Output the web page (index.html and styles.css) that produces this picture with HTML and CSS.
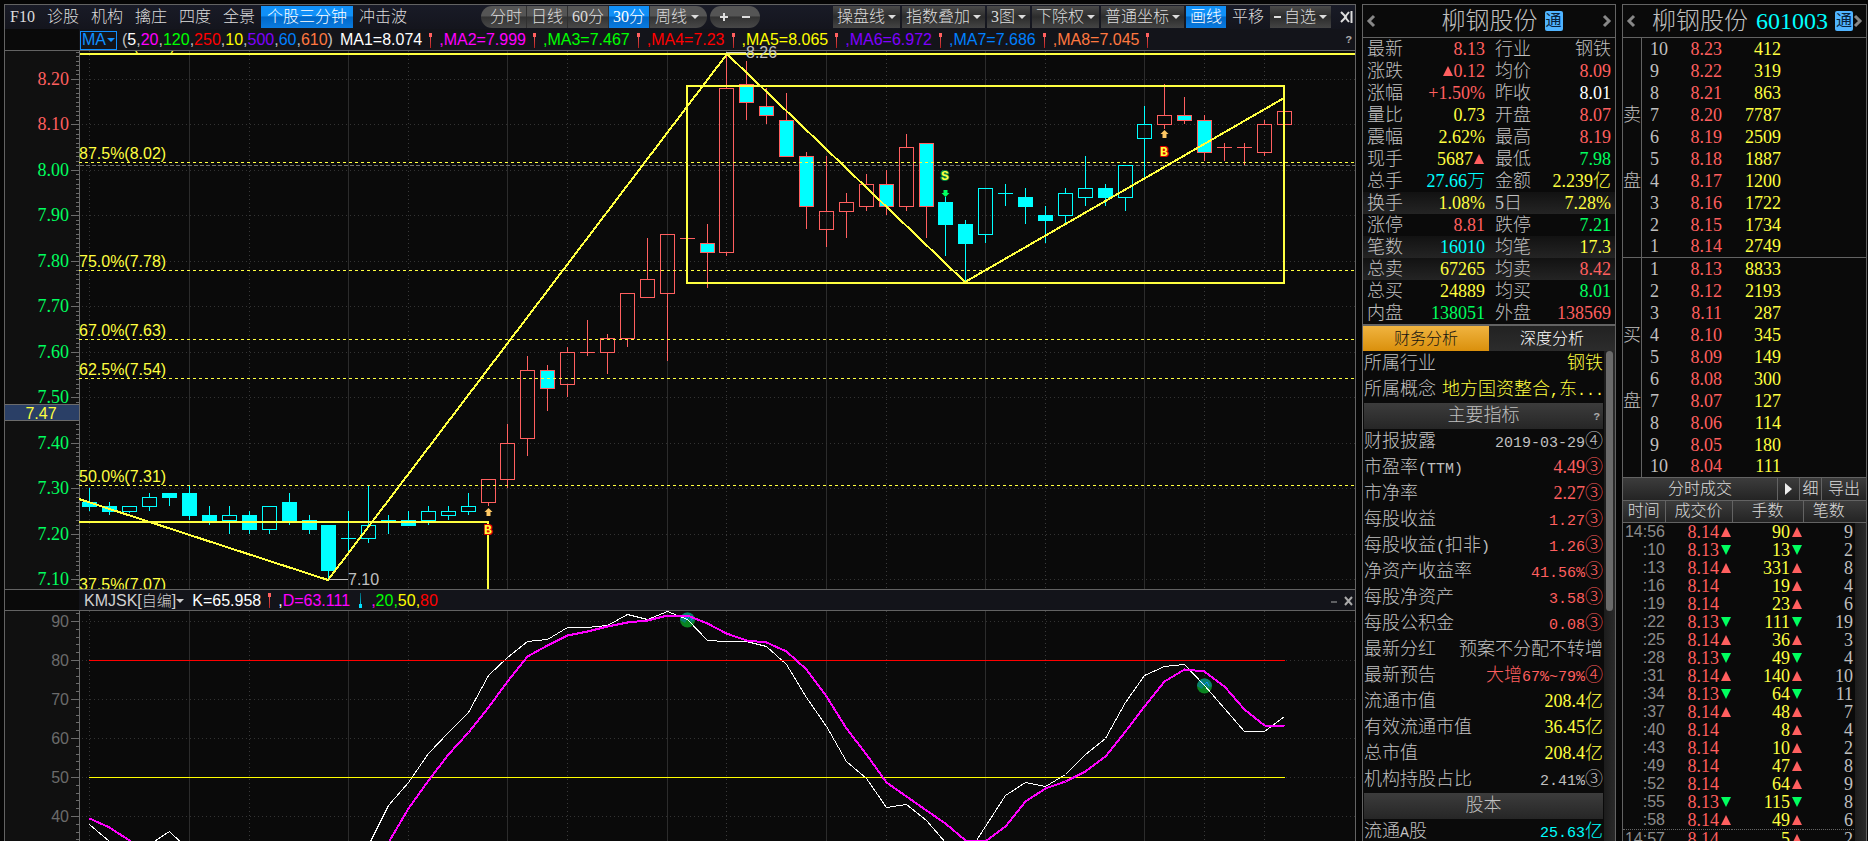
FILE: index.html
```html
<!DOCTYPE html>
<html lang="zh-CN">
<head>
<meta charset="utf-8">
<title>柳钢股份 601003</title>
<link rel="stylesheet" href="styles.css">
</head>
<body>
<div class="app">

<main class="panel charts">
  <nav class="toolbar">
    <div class="tabs">
      <button>F10</button><button>诊股</button><button>机构</button><button>擒庄</button><button>四度</button><button>全景</button><button class="active">个股三分钟</button><button>冲击波</button>
    </div>
    <div class="pill periods">
      <button>分时</button><button>日线</button><button>60分</button><button class="active">30分</button><button>周线<i class="caret"></i></button>
    </div>
    <div class="pill zoomer"><button aria-label="放大"><svg width="10" height="10"><path d="M5 1v8M1 5h8" stroke="#ddd" stroke-width="2"/></svg></button><button aria-label="缩小"><svg width="10" height="10"><path d="M1 5h8" stroke="#ddd" stroke-width="2"/></svg></button></div>
    <div class="tools">
      <button>操盘线<i class="caret"></i></button><button>指数叠加<i class="caret"></i></button><button>3图<i class="caret"></i></button><button>下除权<i class="caret"></i></button><button>普通坐标<i class="caret"></i></button><button class="active">画线</button><button class="plain">平移</button><button><svg width="7" height="8"><path d="M0 4h7" stroke="#ddd" stroke-width="2"/></svg>自选<i class="caret"></i></button><button class="plain end" aria-label="收起"><svg width="13" height="14"><path d="M1 2l5 5-5 5M9 2L5 7l4 5" fill="none" stroke="#ddd" stroke-width="2"/><path d="M11.500 1v12" stroke="#ddd" stroke-width="2"/></svg></button>
    </div>
  </nav>

  <div class="legend">
    <button class="ma">MA<i class="caret"></i></button>
    <p class="params">(<b class="w">5</b>,<b class="m">20</b>,<b class="g">120</b>,<b class="r">250</b>,<b class="y">10</b>,<b class="v">500</b>,<b class="b">60</b>,<b class="o">610</b>)</p>
    <p class="values"><b class="w">MA1=8.074</b><i class="up"></i><b class="m">,MA2=7.999</b><i class="up"></i><b class="g">,MA3=7.467</b><i class="up"></i><b class="r">,MA4=7.23</b><i class="up"></i><b class="y">,MA5=8.065</b><i class="up"></i><b class="v">,MA6=6.972</b><i class="up"></i><b class="b">,MA7=7.686</b><i class="up"></i><b class="o">,MA8=7.045</b><i class="up"></i></p>
    <button class="help" aria-label="帮助">?</button>
  </div>

  <svg class="plot price" id="price" role="img" aria-label="K线图"></svg>

  <div class="legend sub">
    <button class="name">KMJSK[<span>自编</span>]<i class="caret"></i></button>
    <p class="values"><b class="w">K=65.958</b><i class="up"></i><b class="w">,</b><b class="m">D=63.111</b><i class="down"></i><b class="m">,</b><b class="g">20,</b><b class="y">50,</b><b class="r">80</b></p>
    <div class="win"><button aria-label="最小化"><svg width="6" height="10"><path d="M0 6h6" stroke="#aaa" stroke-width="1"/></svg></button><button aria-label="关闭"><svg width="9" height="10"><path d="M1 1l7 8M8 1l-7 8" stroke="#aaa" stroke-width="2"/></svg></button></div>
  </div>

  <svg class="plot osc" id="osc" role="img" aria-label="KMJSK 指标"></svg>
</main>

<section class="panel quote">
  <header class="head">
    <button aria-label="上一个"><svg width="10" height="14"><path d="M8 2L3 7l5 5" fill="none" stroke="#888" stroke-width="3"/></svg></button>
    <h2>柳钢股份<span class="tag">通</span></h2>
    <button aria-label="下一个"><svg width="10" height="14"><path d="M2 2l5 5-5 5" fill="none" stroke="#888" stroke-width="3"/></svg></button>
  </header>
  <table class="facts">
    <tr><th>最新</th><td class="red">8.13</td><th>行业</th><td class="grey">钢铁</td></tr>
    <tr><th>涨跌</th><td class="red"><i class="tri"></i>0.12</td><th>均价</th><td class="red">8.09</td></tr>
    <tr><th>涨幅</th><td class="red">+1.50%</td><th>昨收</th><td class="white">8.01</td></tr>
    <tr><th>量比</th><td class="yel">0.73</td><th>开盘</th><td class="red">8.07</td></tr>
    <tr><th>震幅</th><td class="yel">2.62%</td><th>最高</th><td class="red">8.19</td></tr>
    <tr><th>现手</th><td class="yel">5687<i class="tri"></i></td><th>最低</th><td class="grn">7.98</td></tr>
    <tr><th>总手</th><td class="cyan">27.66万</td><th>金额</th><td class="yel">2.239亿</td></tr>
    <tr class="band"><th>换手</th><td class="yel">1.08%</td><th>5日</th><td class="yel">7.28%</td></tr>
    <tr><th>涨停</th><td class="red">8.81</td><th>跌停</th><td class="grn">7.21</td></tr>
    <tr class="band"><th>笔数</th><td class="cyan">16010</td><th>均笔</th><td class="yel">17.3</td></tr>
    <tr class="band"><th>总卖</th><td class="yel">67265</td><th>均卖</th><td class="red">8.42</td></tr>
    <tr><th>总买</th><td class="yel">24889</td><th>均买</th><td class="grn">8.01</td></tr>
    <tr><th>内盘</th><td class="grn">138051</td><th>外盘</th><td class="red">138569</td></tr>
  </table>
  <div class="switch"><button class="on">财务分析</button><button>深度分析</button></div>
  <div class="fin">
    <dl>
      <div><dt>所属行业</dt><dd class="yel">钢铁</dd></div>
      <div class="concept"><dt>所属概念</dt><dd class="yel">地方国资整合<span class="mono">,</span>东<span class="mono">...</span></dd></div>
      <h3>主要指标<button class="help" aria-label="帮助">?</button></h3>
      <div><dt>财报披露</dt><dd><span class="mono">2019-03-29</span>④</dd></div>
      <div><dt>市盈率<span class="mono">(TTM)</span></dt><dd class="red">4.49③</dd></div>
      <div><dt>市净率</dt><dd class="red">2.27③</dd></div>
      <div><dt>每股收益</dt><dd class="red"><span class="mono">1.27</span>③</dd></div>
      <div><dt>每股收益<span class="mono">(</span>扣非<span class="mono">)</span></dt><dd class="red"><span class="mono">1.26</span>③</dd></div>
      <div><dt>净资产收益率</dt><dd class="red"><span class="mono">41.56%</span>③</dd></div>
      <div><dt>每股净资产</dt><dd class="red"><span class="mono">3.58</span>③</dd></div>
      <div><dt>每股公积金</dt><dd class="red"><span class="mono">0.08</span>③</dd></div>
      <div><dt>最新分红</dt><dd>预案不分配不转增</dd></div>
      <div><dt>最新预告</dt><dd class="red">大增<span class="mono">67%~79%</span>④</dd></div>
      <div><dt>流通市值</dt><dd class="yel">208.4亿</dd></div>
      <div><dt>有效流通市值</dt><dd class="yel">36.45亿</dd></div>
      <div><dt>总市值</dt><dd class="yel">208.4亿</dd></div>
      <div><dt>机构持股占比</dt><dd><span class="mono">2.41%</span>③</dd></div>
      <h3>股本</h3>
      <div><dt>流通<span class="mono">A</span>股</dt><dd class="cyan"><span class="mono">25.63</span>亿</dd></div>
    </dl>
    <div class="track"><div class="thumb"></div></div>
  </div>
</section>

<section class="panel book">
  <header class="head">
    <button aria-label="上一个"><svg width="10" height="14"><path d="M8 2L3 7l5 5" fill="none" stroke="#888" stroke-width="3"/></svg></button>
    <h2>柳钢股份<span class="code">601003</span><span class="tag">通</span></h2>
    <button aria-label="下一个"><svg width="10" height="14"><path d="M2 2l5 5-5 5" fill="none" stroke="#888" stroke-width="3"/></svg></button>
  </header>
  <div class="side">
    <div class="label"><span>卖</span><span>盘</span></div>
    <table>
      <tr><th>10</th><td>8.23</td><td>412</td></tr>
      <tr><th>9</th><td>8.22</td><td>319</td></tr>
      <tr><th>8</th><td>8.21</td><td>863</td></tr>
      <tr><th>7</th><td>8.20</td><td>7787</td></tr>
      <tr><th>6</th><td>8.19</td><td>2509</td></tr>
      <tr><th>5</th><td>8.18</td><td>1887</td></tr>
      <tr><th>4</th><td>8.17</td><td>1200</td></tr>
      <tr><th>3</th><td>8.16</td><td>1722</td></tr>
      <tr><th>2</th><td>8.15</td><td>1734</td></tr>
      <tr><th>1</th><td>8.14</td><td>2749</td></tr>
    </table>
  </div>
  <div class="side">
    <div class="label"><span>买</span><span>盘</span></div>
    <table>
      <tr><th>1</th><td>8.13</td><td>8833</td></tr>
      <tr><th>2</th><td>8.12</td><td>2193</td></tr>
      <tr><th>3</th><td>8.11</td><td>287</td></tr>
      <tr><th>4</th><td>8.10</td><td>345</td></tr>
      <tr><th>5</th><td>8.09</td><td>149</td></tr>
      <tr><th>6</th><td>8.08</td><td>300</td></tr>
      <tr><th>7</th><td>8.07</td><td>127</td></tr>
      <tr><th>8</th><td>8.06</td><td>114</td></tr>
      <tr><th>9</th><td>8.05</td><td>180</td></tr>
      <tr><th>10</th><td>8.04</td><td>111</td></tr>
    </table>
  </div>
  <div class="bar"><button class="grow">分时成交</button><button class="play" aria-label="展开"><svg width="7" height="12"><path d="M0 0l7 6-7 6z" fill="#eee"/></svg></button><button class="fine">细</button><button class="export">导出</button></div>
  <div class="trades">
    <table>
      <thead><tr><th>时间</th><th>成交价</th><th>手数</th><th>笔数</th></tr></thead>
      <tbody>
      <tr><td>14:56</td><td>8.14<i class="tri"></i></td><td>90<i class="tri"></i></td><td>9</td></tr>
      <tr><td>:10</td><td>8.13<i class="tri dn"></i></td><td>13<i class="tri dn"></i></td><td>2</td></tr>
      <tr><td>:13</td><td>8.14<i class="tri"></i></td><td>331<i class="tri"></i></td><td>8</td></tr>
      <tr><td>:16</td><td>8.14<i class="tri no"></i></td><td>19<i class="tri"></i></td><td>4</td></tr>
      <tr><td>:19</td><td>8.14<i class="tri no"></i></td><td>23<i class="tri"></i></td><td>6</td></tr>
      <tr><td>:22</td><td>8.13<i class="tri dn"></i></td><td>111<i class="tri dn"></i></td><td>19</td></tr>
      <tr><td>:25</td><td>8.14<i class="tri"></i></td><td>36<i class="tri"></i></td><td>3</td></tr>
      <tr><td>:28</td><td>8.13<i class="tri dn"></i></td><td>49<i class="tri dn"></i></td><td>4</td></tr>
      <tr><td>:31</td><td>8.14<i class="tri"></i></td><td>140<i class="tri"></i></td><td>10</td></tr>
      <tr><td>:34</td><td>8.13<i class="tri dn"></i></td><td>64<i class="tri dn"></i></td><td>11</td></tr>
      <tr><td>:37</td><td>8.14<i class="tri"></i></td><td>48<i class="tri"></i></td><td>7</td></tr>
      <tr><td>:40</td><td>8.14<i class="tri no"></i></td><td>8<i class="tri"></i></td><td>4</td></tr>
      <tr><td>:43</td><td>8.14<i class="tri no"></i></td><td>10<i class="tri"></i></td><td>2</td></tr>
      <tr><td>:49</td><td>8.14<i class="tri no"></i></td><td>47<i class="tri"></i></td><td>8</td></tr>
      <tr><td>:52</td><td>8.14<i class="tri no"></i></td><td>64<i class="tri"></i></td><td>9</td></tr>
      <tr><td>:55</td><td>8.13<i class="tri dn"></i></td><td>115<i class="tri dn"></i></td><td>8</td></tr>
      <tr><td>:58</td><td>8.14<i class="tri"></i></td><td>49<i class="tri"></i></td><td>6</td></tr>
      <tr class="minute"><td>14:57</td><td>8.14<i class="tri no"></i></td><td>5<i class="tri"></i></td><td>2</td></tr>
      </tbody>
    </table>
    <div class="track"></div>
  </div>
</section>

</div>
<script src="chart.js"></script>
</body>
</html>
```

FILE: styles.css
```css
* { box-sizing: border-box; }
html, body { margin: 0; height: 100%; }
body {
  background: #050505;
  color: #c0c0c0;
  font: 18px/22px "Liberation Serif", "Noto Sans CJK SC", serif;
  overflow: hidden;
}
button {
  margin: 0; padding: 0; border: 0; background: none;
  color: inherit; font: inherit; line-height: inherit; cursor: pointer; white-space: nowrap;
}
h2, h3, p, dl, dd { margin: 0; font-weight: 400; }
h2, h3, th, dt, button, td, dd { font-weight: 300; }
th { text-align: left; }
table { border-collapse: collapse; border-spacing: 0; }
i { font-style: normal; }
svg { display: block; }

.app {
  display: grid;
  grid-template-columns: minmax(0, 1fr) 254px 245px;
  gap: 6px;
  height: 100vh;
  padding: 4px 1px 0 4px;
}
.panel {
  display: flex; flex-direction: column;
  min-height: 0; overflow: hidden;
  border: 1px solid #636363; border-bottom: 0;
  background: #0a0a0a;
}

.red { color: #ff5f5f; }
.grn { color: #00ff5f; }
.yel { color: #ffff40; }
.cyan { color: #00ffff; }
.white { color: #fff; }
.mono { font-family: "Liberation Mono", monospace; font-size: 15px; }

.caret {
  display: inline-block;
  border: 4px solid transparent; border-top-color: currentColor; border-bottom: 0;
}

/* toolbar */
.toolbar {
  display: flex; align-items: center; flex: none;
  height: 24px;
  background: linear-gradient(#191b27, #14151d);
  color: #dcdcdc; font-size: 16px; line-height: 22px;
}
.tabs, .tools, .pill { display: flex; }
.tabs { margin-right: 68px; }
.tabs button { padding: 0 6px; }
.tabs button:first-child { padding-left: 5px; }
.tabs button, .pill button, .tools button { height: 22px; }
.toolbar .active { background: linear-gradient(#1090f8 45%, #0068c8 50%, #0a7be0); color: #fff; }
.pill {
  border-radius: 11px; overflow: hidden;
  background: linear-gradient(#555 45%, #333 50%, #484848);
}
.periods button { padding: 0 4px; border-right: 1px solid #303030; }
.periods button:first-child { padding: 0 4px 0 9px; }
.periods button:last-child { display: flex; align-items: center; gap: 4px; padding: 0 8px 0 5px; border: 0; }
.zoomer { margin-left: 3px; padding: 0 9px; gap: 12px; }
.zoomer button { display: flex; align-items: center; }
.tools { gap: 2px; margin-left: auto; margin-right: 2px; }
.tools button {
  display: flex; align-items: center; gap: 3px; padding: 0 4px;
  background: linear-gradient(#4a4a4a, #2c2c2c 50%, #444);
}
.tools .active { background: linear-gradient(#1090f8 45%, #0068c8 50%, #0a7be0); }
.tools .plain { background: none; }
.tools .end { padding: 0; margin-left: 7px; }

/* legends */
.legend {
  display: flex; align-items: center; flex: none;
  height: 22px; padding-left: 75px; padding-top: 1px;
  background: linear-gradient(90deg, #0a0a0a 74px, #13141a 74px);
  border-bottom: 1px solid #636363;
  font: 16px/20px "Liberation Sans", "Noto Sans CJK SC", sans-serif;
}
.legend b { font-weight: 400; }
.ma {
  display: flex; align-items: center; gap: 1px; height: 19px; padding: 0 1px;
  border: 1px solid #1090ff; color: #1090ff; margin-right: 5px;
}
.params { margin-right: 7px; }
.values { display: flex; align-items: center; }
.w { color: #fff; } .m { color: #f0f; } .g { color: #0f0; } .r { color: #f00; }
.y { color: #ff0; } .v { color: #8000ff; } .b { color: #0080ff; } .o { color: #ff7840; }
.up, .down { width: 17px; height: 15px; background: linear-gradient(#ff6060, #b02020) center / 1px 100% no-repeat; }
.down { width: 21px; background-image: linear-gradient(#006070, #00e0ff); }
.up::before, .down::after {
  content: ""; display: block; width: 3px; height: 4px; margin: 0 auto; background: #ff6060;
}
.down::after { margin-top: 11px; background: #00e0ff; }
.help { margin-left: auto; margin-right: 3px; color: #aaa; font: 700 11px/20px "Liberation Mono", monospace; }
.sub { border-top: 1px solid #636363; padding-left: 79px; }
.name { display: flex; align-items: center; color: #d0d0d0; margin-right: 8px; }
.name span { font-size: 15px; }
.win { display: flex; align-items: center; gap: 7px; margin-left: auto; margin-right: 2px; }

/* plots */
.plot { width: 100%; flex: 0 0 538px; overflow: hidden; }
.price { position: relative; overflow: visible; }
.osc { flex: 1 1 0; min-height: 0; }
.plot text { font: 16px "Liberation Sans", sans-serif; }
.plot .tick { font: 18px "Liberation Serif", serif; text-anchor: end; }
.plot .end { text-anchor: end; }
.plot .mid { text-anchor: middle; }
.plot .mark { font: 700 13px "Liberation Mono", monospace; text-anchor: middle; paint-order: stroke; stroke-width: 2px; }
.crisp { shape-rendering: crispEdges; }

/* panel heads */
.head {
  display: flex; align-items: center; flex: none;
  height: 33px; padding: 0 3px; border-bottom: 1px solid #636363;
}
.head h2 {
  display: flex; align-items: center; justify-content: center; flex: 1;
  font-size: 24px; line-height: 32px; padding-left: 26px; white-space: nowrap;
}
.tag {
  flex: none; margin-left: 7px; width: 18px; height: 20px; border-radius: 2px;
  background: #50b4ff; color: #08223c; font-size: 16px; line-height: 19px; text-align: center; font-weight: 400;
}
.book .head h2 { padding-left: 16px; justify-content: flex-start; }
.code { color: #0ff; margin-left: 8px; font-weight: 400; }

/* quote */
.facts { width: 100%; table-layout: fixed; border-bottom: 2px solid #636363; }
.facts tr { height: 22px; }
.facts th, .facts td { padding: 0; line-height: 22px; white-space: nowrap; }
.facts th:first-child { width: 44px; padding-left: 4px; }
.facts th:nth-child(3) { width: 52px; padding-left: 10px; }
.facts td { text-align: right; }
.facts td:nth-child(2) { width: 78px; }
.facts td:last-child { padding-right: 4px; }
.band { background: linear-gradient(#121212, #242424); }
.tri {
  display: inline-block; vertical-align: 1px; margin: 0 1px 0 2px;
  border: 5px solid transparent; border-bottom: 10px solid #ff5f5f; border-top: 0;
}
.tri.dn { border-bottom: 0; border-top: 10px solid #00ff5f; }
.tri.no { border-color: transparent; }
.facts .tri { margin: 0 1px; }
.switch { display: flex; flex: none; height: 25px; font-size: 16px; line-height: 22px; }
.switch button { flex: 1; color: #fff; background: linear-gradient(#222, #2c2c2c); }
.switch .on { color: #111; background: linear-gradient(#f0b440, #da900c); }
.fin { display: flex; flex: 1; min-height: 0; }
.fin dl { flex: 1; padding: 0 1px; overflow: hidden; }
.fin dl > div { display: flex; justify-content: space-between; height: 26px; line-height: 25px; white-space: nowrap; }
.fin .concept { justify-content: flex-start; gap: 6px; }
.fin h3 {
  position: relative; height: 26px; text-align: center; font-size: 18px; line-height: 25px;
  background: linear-gradient(#3c3c3c, #262626);
}
.fin h3 .help { position: absolute; right: 0; top: 4px; }
.track { flex: 0 0 11px; background: linear-gradient(90deg, #1c1c1c, #2a2a2a); padding: 0 2px; }
.thumb { height: 260px; border-radius: 4px; background: #6a6a6a; }

/* order book */
.side { display: flex; flex: none; border-bottom: 1px solid #636363; }
.label {
  display: flex; flex-direction: column; justify-content: center; gap: 44px;
  width: 19px; border-right: 1px solid #636363; font-weight: 300;
}
.side tr { height: 22px; }
.side tr:last-child { height: 21px; }
.side th, .side td { padding: 0; line-height: 21px; }
.side th { width: 40px; padding-left: 8px; }
.side td { text-align: right; color: #ff5f5f; width: 40px; }
.side td:last-child { color: #ffff40; width: 59px; }
.bar {
  display: flex; flex: none; height: 23px; border-bottom: 1px solid #636363;
  background: linear-gradient(#3c3c3c, #242424); color: #dcdcdc; font-size: 16px; line-height: 22px;
}
.bar .grow { flex: 1; }
.bar button + button { border-left: 1px solid #636363; }
.bar .play { width: 22px; display: flex; align-items: center; justify-content: center; }
.bar .fine { width: 22px; }
.bar .export { width: 45px; }
.trades { position: relative; flex: 1; min-height: 0; overflow: hidden; }
.trades table { width: 100%; table-layout: fixed; }
.trades thead { background: linear-gradient(#3c3c3c, #242424); color: #dcdcdc; }
.trades thead th {
  height: 21px; padding: 0; line-height: 20px; font-size: 16px; text-align: center;
  border-bottom: 1px solid #636363; border-left: 1px solid #636363;
}
.trades thead th:first-child { width: 42px; border-left: 0; }
.trades thead th:nth-child(2) { width: 67px; }
.trades thead th:nth-child(3) { width: 71px; }
.trades thead th:last-child { padding-right: 12px; }
.trades tbody tr { height: 18px; }
.trades tbody td { padding: 0; line-height: 18px; text-align: right; }
.trades td:first-child { font: 16px/18px "Liberation Sans", sans-serif; color: #8c8c8c; }
.trades td:nth-child(2) { color: #ff5f5f; }
.trades td:nth-child(3) { color: #ffff40; }
.trades td:last-child { padding-right: 13px; }
.trades .minute td { border-top: 1px dotted #666; }
.trades .track { position: absolute; right: 0; top: 22px; bottom: 0; width: 11px; }
```

FILE: chart.js
```js
const NS = 'http://www.w3.org/2000/svg';
const RED = '#ff5f5f', CYAN = '#00ffff', YEL = '#ffff40', GREEN = '#00ff5f', AXIS = '#6b6b6b';
const AXIS_X = 74;

function add(parent, tag, attrs, text) {
  const el = document.createElementNS(NS, tag);
  for (const k in attrs) el.setAttribute(k, attrs[k]);
  if (text !== undefined) el.textContent = text;
  parent.appendChild(el);
  return el;
}
function hline(svg, x1, x2, y, color, extra) {
  add(svg, 'line', { x1, x2, y1: y + 0.5, y2: y + 0.5, stroke: color, class: 'crisp', ...extra });
}
function vline(svg, x, y1, y2, color, extra) {
  add(svg, 'line', { x1: x + 0.5, x2: x + 0.5, y1, y2, stroke: color, class: 'crisp', ...extra });
}
const shifts = [12, 21, 32, 43, 53];
const barX = i => 84 + 20 * i - shifts.filter(s => s <= i).length;
const priceY = p => Math.round(28 + (8.2 - p) * 454.6);

function verticalGrid(svg) {
  for (let i = 5; i <= 53; i += 8) vline(svg, barX(i), 0, '100%', '#2c2c2c');
  for (const i of [0, 8, 16, 24, 32, 40, 48, 56, 59])
    vline(svg, barX(i), 0, '100%', '#3a3a3a', { 'stroke-dasharray': '1 3' });
}

/* price chart; bars are [body top, body bottom, high, low, kind]
   kind: c / C = cyan hollow / solid, r / R = red hollow / red frame with cyan body */
const bars = [
  [7.27,7.26,7.30,7.25,'C'],[7.26,7.25,7.27,7.24,'C'],[7.26,7.25,7.26,7.245,'c'],[7.28,7.26,7.29,7.25,'c'],
  [7.29,7.28,7.29,7.26,'C'],[7.29,7.24,7.305,7.23,'C'],[7.24,7.23,7.26,7.22,'C'],[7.24,7.23,7.26,7.20,'c'],
  [7.24,7.21,7.25,7.20,'C'],[7.26,7.21,7.26,7.20,'c'],[7.27,7.23,7.29,7.22,'C'],[7.23,7.21,7.24,7.20,'C'],
  [7.22,7.12,7.22,7.10,'C'],[7.19,7.19,7.25,7.16,'c'],[7.22,7.19,7.305,7.18,'c'],[7.23,7.227,7.24,7.20,'C'],
  [7.23,7.22,7.25,7.22,'C'],[7.25,7.23,7.26,7.22,'c'],[7.25,7.24,7.26,7.23,'c'],[7.26,7.25,7.29,7.24,'c'],
  [7.32,7.27,7.32,7.26,'r'],[7.40,7.32,7.44,7.30,'r'],[7.56,7.41,7.59,7.37,'r'],[7.56,7.52,7.57,7.47,'R'],
  [7.60,7.53,7.61,7.50,'r'],[7.60,7.60,7.67,7.59,'r'],[7.63,7.60,7.64,7.55,'r'],[7.73,7.63,7.73,7.61,'r'],
  [7.76,7.72,7.85,7.72,'r'],[7.86,7.73,7.86,7.58,'r'],[7.85,7.85,7.85,7.85,'r'],[7.84,7.82,7.88,7.74,'R'],
  [8.18,7.82,8.255,7.81,'r'],[8.19,8.15,8.24,8.11,'R'],[8.14,8.12,8.18,8.10,'R'],[8.11,8.03,8.17,8.03,'R'],
  [8.03,7.92,8.04,7.87,'R'],[7.91,7.87,8.03,7.83,'r'],[7.93,7.91,7.95,7.85,'r'],[7.97,7.92,7.99,7.91,'r'],
  [7.97,7.92,8.00,7.90,'R'],[8.05,7.92,8.08,7.91,'r'],[8.06,7.92,8.06,7.85,'R'],[7.93,7.88,7.94,7.81,'C'],
  [7.88,7.84,7.89,7.755,'C'],[7.96,7.86,7.96,7.84,'c'],[7.95,7.95,7.97,7.92,'c'],[7.94,7.92,7.96,7.88,'C'],
  [7.90,7.89,7.92,7.84,'C'],[7.95,7.90,7.96,7.88,'c'],[7.96,7.94,8.03,7.92,'c'],[7.96,7.94,7.97,7.92,'C'],
  [8.01,7.94,8.01,7.91,'c'],[8.10,8.07,8.14,7.985,'c'],[8.12,8.10,8.19,8.09,'r'],[8.12,8.11,8.16,8.10,'R'],
  [8.11,8.04,8.12,8.02,'R'],[8.05,8.05,8.06,8.02,'r'],[8.05,8.05,8.06,8.01,'r'],[8.10,8.04,8.11,8.03,'r'],
  [8.13,8.10,8.13,8.10,'r']
];

function drawPrice() {
  const svg = document.getElementById('price');
  add(svg, 'rect', { x: 0, y: 0, width: AXIS_X, height: '100%', fill: '#101010' });
  verticalGrid(svg);
  for (let c = 826; c >= 709; c--) hline(svg, AXIS_X - 3, AXIS_X, priceY(c / 100), AXIS);
  for (let c = 820; c >= 710; c -= 10) {
    const y = priceY(c / 100);
    hline(svg, 77, '100%', y, '#333', { 'stroke-dasharray': '1 3' });
    hline(svg, 66, AXIS_X, y, AXIS);
    add(svg, 'text', { x: 64, y: y + 6, class: 'tick', fill: c > 800 ? RED : GREEN }, (c / 100).toFixed(2));
  }
  vline(svg, AXIS_X, 0, '100%', AXIS);

  hline(svg, 75, '100%', 114, '#707070', { 'stroke-dasharray': '4 2' });

  bars.forEach(([top, bottom, high, low, kind], i) => {
    const x = barX(i), yt = priceY(top), yb = priceY(bottom);
    const color = kind.toLowerCase() === 'c' ? CYAN : RED;
    const solid = kind === kind.toUpperCase();
    if (high > top) vline(svg, x, priceY(high), yt, color);
    if (low < bottom) vline(svg, x, yb, priceY(low), color);
    if (yt === yb) hline(svg, x - 7, x + 8, yt, color);
    else add(svg, 'rect', { x: x - 6.5, y: yt + 0.5, width: 14, height: yb - yt,
      fill: solid ? CYAN : 'none', stroke: color, class: 'crisp' });
  });

  /* nested viewport clips the first and last level labels at the plot edges */
  const levels = add(svg, 'svg', { width: '100%', height: '100%' });
  [['100.0%(8.26)', 3], ['87.5%(8.02)', 111], ['75.0%(7.78)', 219], ['67.0%(7.63)', 288], ['62.5%(7.54)', 327], ['50.0%(7.31)', 434], ['37.5%(7.07)', 542]]
    .forEach(([label, y]) => {
      if (y > 3) hline(levels, 74, '100%', y, YEL, { 'stroke-dasharray': '3 3' });
      add(levels, 'text', { x: 74, y: y - 3, fill: YEL }, label);
    });

  const pen = { fill: 'none', stroke: YEL, 'stroke-width': 2, class: 'crisp' };
  add(svg, 'line', { x1: 75, x2: '100%', y1: 3, y2: 3, ...pen });
  add(svg, 'rect', { x: 682, y: 35, width: 597, height: 197, ...pen });
  add(svg, 'polyline', { points: '74,471 483,471 483,538', ...pen });
  add(svg, 'polyline', { points: '74,448 323,529 722,3 960,231 1279,47', ...pen });

  hline(svg, 721, 741, 1, '#c0c0c0');
  add(svg, 'text', { x: 741, y: 7, fill: '#c0c0c0' }, '8.26');
  hline(svg, 324, 343, 528, '#c0c0c0');
  add(svg, 'text', { x: 343, y: 534, fill: '#c0c0c0' }, '7.10');

  const up = 'l4 4h-2v4h-4v-4h-2z', down = 'l4 -4h-2v-3h-4v3h-2z';
  add(svg, 'path', { d: 'M483.5 457' + up, fill: '#ffc864' });
  add(svg, 'path', { d: 'M1159.5 79' + up, fill: '#ffc864' });
  add(svg, 'path', { d: 'M940.5 146' + down, fill: GREEN });
  add(svg, 'text', { x: 483, y: 483, class: 'mark', fill: YEL, stroke: '#e00000' }, 'B');
  add(svg, 'text', { x: 1159, y: 105, class: 'mark', fill: YEL, stroke: '#e00000' }, 'B');
  add(svg, 'text', { x: 940, y: 129, class: 'mark', fill: YEL, stroke: '#008040' }, 'S');

  add(svg, 'rect', { x: -0.5, y: 353.5, width: 75, height: 16, fill: '#2a3f66', stroke: AXIS, class: 'crisp' });
  add(svg, 'text', { x: 36, y: 368, class: 'mid', fill: YEL }, '7.47');
}

/* oscillator; one value per bar, measured down from the top of the plot */
const K = [213,230,239,233,220,239,260,270,280,285,290,290,285,269,234,194,171,142,121,101,64,46,30,28,16,16,14,3,8,0,8,
  29,30,30,35,53,86,115,150,167,196,193,209,231,246,215,184,171,175,163,143,127,91,64,55,53,74,97,120,120,105];
const D = [207,216,229,249,260,265,270,275,280,285,290,290,285,275,262,231,197,169,143,121,96,70,45,34,24,20,15,11,9,4,4,
  12,22,29,31,40,58,85,117,143,171,185,199,212,229,230,215,190,177,170,160,145,120,95,70,58,60,75,98,114,115];

function drawOsc() {
  const svg = document.getElementById('osc');
  add(svg, 'rect', { x: 0, y: 0, width: AXIS_X, height: '100%', fill: '#101010' });
  verticalGrid(svg);
  for (let v = 92; v >= 30; v -= 2) hline(svg, AXIS_X - 3, AXIS_X, Math.round(10 + (90 - v) * 3.9), AXIS);
  for (let v = 90; v >= 40; v -= 10) {
    const y = 10 + (90 - v) * 3.9;
    hline(svg, 77, '100%', y, '#333', { 'stroke-dasharray': '1 3' });
    hline(svg, 66, AXIS_X, y, AXIS);
    add(svg, 'text', { x: 64, y: y + 6, class: 'end', fill: '#6b6b6b' }, v);
  }
  vline(svg, AXIS_X, 0, '100%', AXIS);
  for (const [x, y] of [[682, 9], [1199, 75]]) {
    add(svg, 'circle', { cx: x + 0.5, cy: y, r: 7.5, fill: '#0a8420' });
    add(svg, 'path', { d: `M${x - 7} ${y}a7.500 7.500 0 0 1 15 0l-4 3l-3 -5l-3 5z`, fill: '#088070' });
    add(svg, 'path', { d: `M${x - 3} ${y - 5}l3 4l3 -3l2 4`, fill: 'none', stroke: '#1090ff' });
  }
  const path = values => values.map((v, i) => (barX(i) + 0.5) + ',' + (v + 0.5)).join(' ');
  add(svg, 'polyline', { points: path(K), fill: 'none', stroke: '#fff', class: 'crisp' });
  hline(svg, 84, 1280, 49, '#ff0000');
  hline(svg, 84, 1280, 166, '#ffff00');
  add(svg, 'polyline', { points: path(D), fill: 'none', stroke: '#ff00ff', 'stroke-width': 2, class: 'crisp' });
}

drawPrice();
drawOsc();
```
